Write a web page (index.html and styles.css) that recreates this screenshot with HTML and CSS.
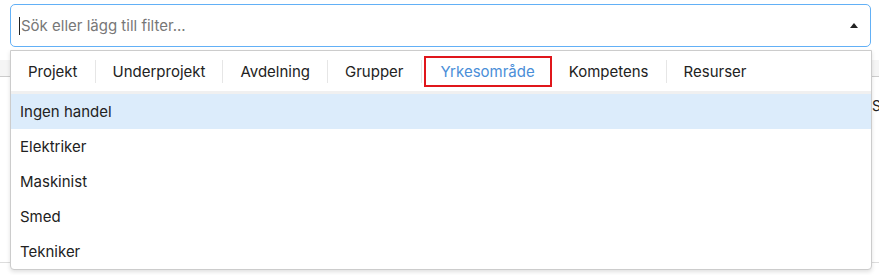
FILE: index.html
```html
<!DOCTYPE html>
<html lang="sv">
<head>
    <meta charset="UTF-8">
    <meta name="viewport" content="width=device-width, initial-scale=1.0">
    <title>Filter</title>
    <link rel="stylesheet" href="styles.css">
</head>
<body>
    <div class="page">
        <div class="search-wrap">
            <div class="search">
                <span class="caret"></span>
                <span class="placeholder">Sök eller lägg till filter...</span>
                <span class="arrow"></span>
            </div>
        </div>

        <div class="table">
            <div class="table-head">
                <div></div>
                <div></div>
            </div>
            <div class="table-row">
                <div></div>
                <div>Sammanställning</div>
            </div>
            <div class="table-row tall">
                <div></div>
                <div></div>
            </div>
        </div>

        <div class="dropdown">
            <div class="tabs">
                <span class="tab">Projekt</span>
                <span class="sep"></span>
                <span class="tab">Underprojekt</span>
                <span class="sep"></span>
                <span class="tab">Avdelning</span>
                <span class="sep"></span>
                <span class="tab">Grupper</span>
                <span class="sep"></span>
                <span class="tab active">Yrkesområde</span>
                <span class="tab">Kompetens</span>
                <span class="sep"></span>
                <span class="tab">Resurser</span>
            </div>
            <ul class="options">
                <li class="selected">Ingen handel</li>
                <li>Elektriker</li>
                <li>Maskinist</li>
                <li>Smed</li>
                <li>Tekniker</li>
            </ul>
        </div>
    </div>
</body>
</html>
```

FILE: styles.css
```css
body {
    margin: 0;
    padding: 0;
    overflow: hidden;
    font-family: 'Inter', 'Roboto', sans-serif;
    font-size: 15px;
    color: #222;
    background: #fff;
    height: 100vh;
}

.page {
    position: relative;
    height: 100%;
}

.search-wrap {
    padding: 4px 8px 0 10px;
}

.search {
    display: flex;
    align-items: center;
    height: 41px;
    border: 1px solid #62b0f6;
    border-radius: 5px;
    padding: 0 12px 0 8px;
}

.caret {
    width: 1px;
    height: 18px;
    background: #222;
    margin-right: 1px;
}

.placeholder {
    flex: 1;
    color: #777;
}

.arrow {
    width: 0;
    height: 0;
    border-left: 4.5px solid transparent;
    border-right: 4.5px solid transparent;
    border-bottom: 5px solid #222;
}

/* table behind the dropdown */
.table {
    margin-top: 13px;
}

.table-head,
.table-row {
    display: grid;
    grid-template-columns: 872px 1fr;
}

.table-head {
    height: 16px;
    background: #f5f5f5;
    border-bottom: 1px solid #ccc;
}

.table-row {
    height: 56px;
    align-items: center;
    font-size: 14px;
    white-space: nowrap;
    overflow: hidden;
}

.table-row.tall {
    height: 129px;
    border-bottom: 1px solid #ddd;
}

/* dropdown */
.dropdown {
    position: absolute;
    top: 50px;
    left: 10px;
    width: 860px;
    background: #fff;
    border: 1px solid #ccc;
    border-radius: 0 0 4px 4px;
    box-shadow: 0 2px 4px rgba(0, 0, 0, 0.12);
}

.tabs {
    display: flex;
    align-items: center;
    height: 40px;
    border-bottom: 3px solid #f0f0f0;
}

.tab {
    padding: 4px 15px;
    border: 2px solid transparent;
    line-height: 19px;
    color: #222;
    white-space: nowrap;
}

.tab.active {
    color: #4a8ed8;
    border-color: #e0161b;
    margin-left: 2px;
}

.sep {
    width: 1px;
    height: 23px;
    background: #e6e6e6;
}

.options {
    list-style: none;
    margin: 0;
    padding: 0;
}

.options li {
    height: 35px;
    line-height: 35px;
    padding: 0 9px;
}

.options li.selected {
    background: #dcecfb;
}
```
